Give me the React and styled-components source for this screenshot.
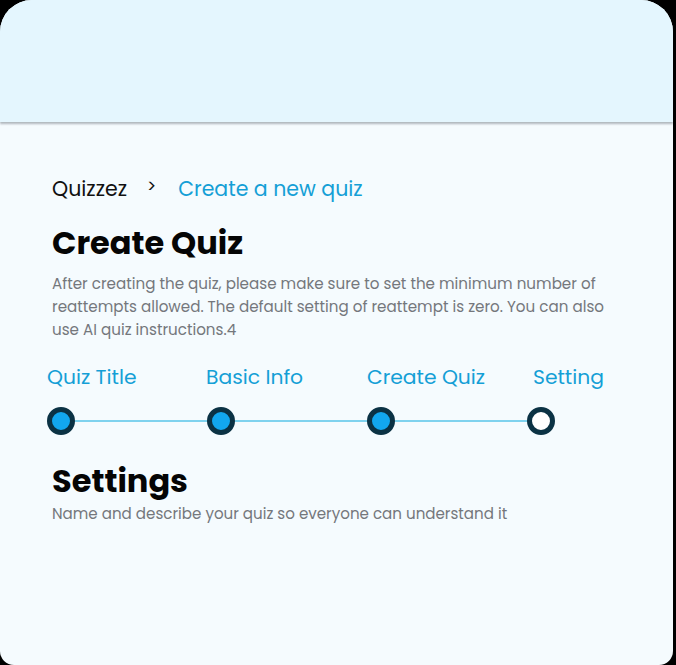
import styled, { createGlobalStyle } from "styled-components";

const GlobalStyle = createGlobalStyle`
  body {
    margin: 0;
    background: #000;
    font-family: "Poppins", Inter, "Noto Sans", sans-serif;
  }
`;

const steps = [
  { label: "Quiz Title", done: true, shift: 0 },
  { label: "Basic Info", done: true, shift: -1 },
  { label: "Create Quiz", done: true, shift: 0 },
  { label: "Setting", done: false, shift: 6 },
];

const App = () => {
  return (
    <>
      <GlobalStyle />
      <Card>
        <Header />
        <Body>
          <Crumbs>
            <CrumbRoot>Quizzez</CrumbRoot>
            <CrumbSep>&gt;</CrumbSep>
            <CrumbLink>Create a new quiz</CrumbLink>
          </Crumbs>
          <Title>Create Quiz</Title>
          <Lead>
            After creating the quiz, please make sure to set the minimum number of
            reattempts allowed. The default setting of reattempt is zero. You can also
            use AI quiz instructions.4
          </Lead>
          <Steps>
            {steps.map((s, i) => (
              <Step key={s.label}>
                <StepLabel $shift={s.shift}>{s.label}</StepLabel>
                <Track>
                  <Dot $done={s.done} />
                  {i < steps.length - 1 && <Connector />}
                </Track>
              </Step>
            ))}
          </Steps>
          <SubTitle>Settings</SubTitle>
          <SubLead>Name and describe your quiz so everyone can understand it</SubLead>
        </Body>
      </Card>
    </>
  );
};

const Card = styled.div`
  width: 673px;
  height: 665px;
  display: flex;
  flex-direction: column;
  background: #f5fbfe;
  border-radius: 32px 32px 14px 14px;
  overflow: hidden;
`;
const Header = styled.div`
  height: 122px;
  flex-shrink: 0;
  background: #e4f6fe;
  box-shadow: 0 2px 2px rgba(90, 100, 110, 0.45);
  position: relative;
  z-index: 1;
`;
const Body = styled.div`
  flex: 1;
  padding: 52px 52px 0 52px;
`;
const Crumbs = styled.div`
  display: flex;
  align-items: center;
  font-size: 20.5px;
  height: 28px;
`;
const CrumbRoot = styled.span`
  color: #111;
`;
const CrumbSep = styled.span`
  color: #111;
  font-size: 17px;
  margin: -5px 22px 0 20px;
`;
const CrumbLink = styled.span`
  color: #149fd6;
`;
const Title = styled.h1`
  margin: 21px 0 0;
  font-size: 32px;
  font-weight: 700;
  color: #050505;
  line-height: 40px;
`;
const Lead = styled.p`
  margin: 9px 0 0;
  font-size: 15.15px;
  line-height: 23px;
  color: #74777c;
  max-width: 570px;
`;
const Steps = styled.div`
  display: grid;
  grid-template-columns: repeat(4, 160px);
  margin: 22px 0 0 -5px;
`;
const Step = styled.div`
  display: flex;
  flex-direction: column;
`;
const StepLabel = styled.div`
  font-size: 20.3px;
  line-height: 28px;
  color: #149fd6;
  white-space: nowrap;
  margin-left: ${(p) => p.$shift}px;
`;
const Track = styled.div`
  display: flex;
  align-items: center;
  margin-top: 16px;
`;
const Dot = styled.div`
  width: 28px;
  height: 28px;
  box-sizing: border-box;
  border-radius: 50%;
  border: 5px solid #0b3244;
  background: ${(p) => (p.$done ? "#12a7ef" : "#ffffff")};
  flex-shrink: 0;
`;
const Connector = styled.div`
  flex: 1;
  height: 2px;
  background: #7fd2ee;
`;
const SubTitle = styled.h2`
  margin: 26px 0 0;
  font-size: 32px;
  font-weight: 700;
  color: #050505;
  line-height: 40px;
`;
const SubLead = styled.p`
  margin: 1px 0 0;
  font-size: 15.1px;
  color: #74777c;
`;

export default App;
